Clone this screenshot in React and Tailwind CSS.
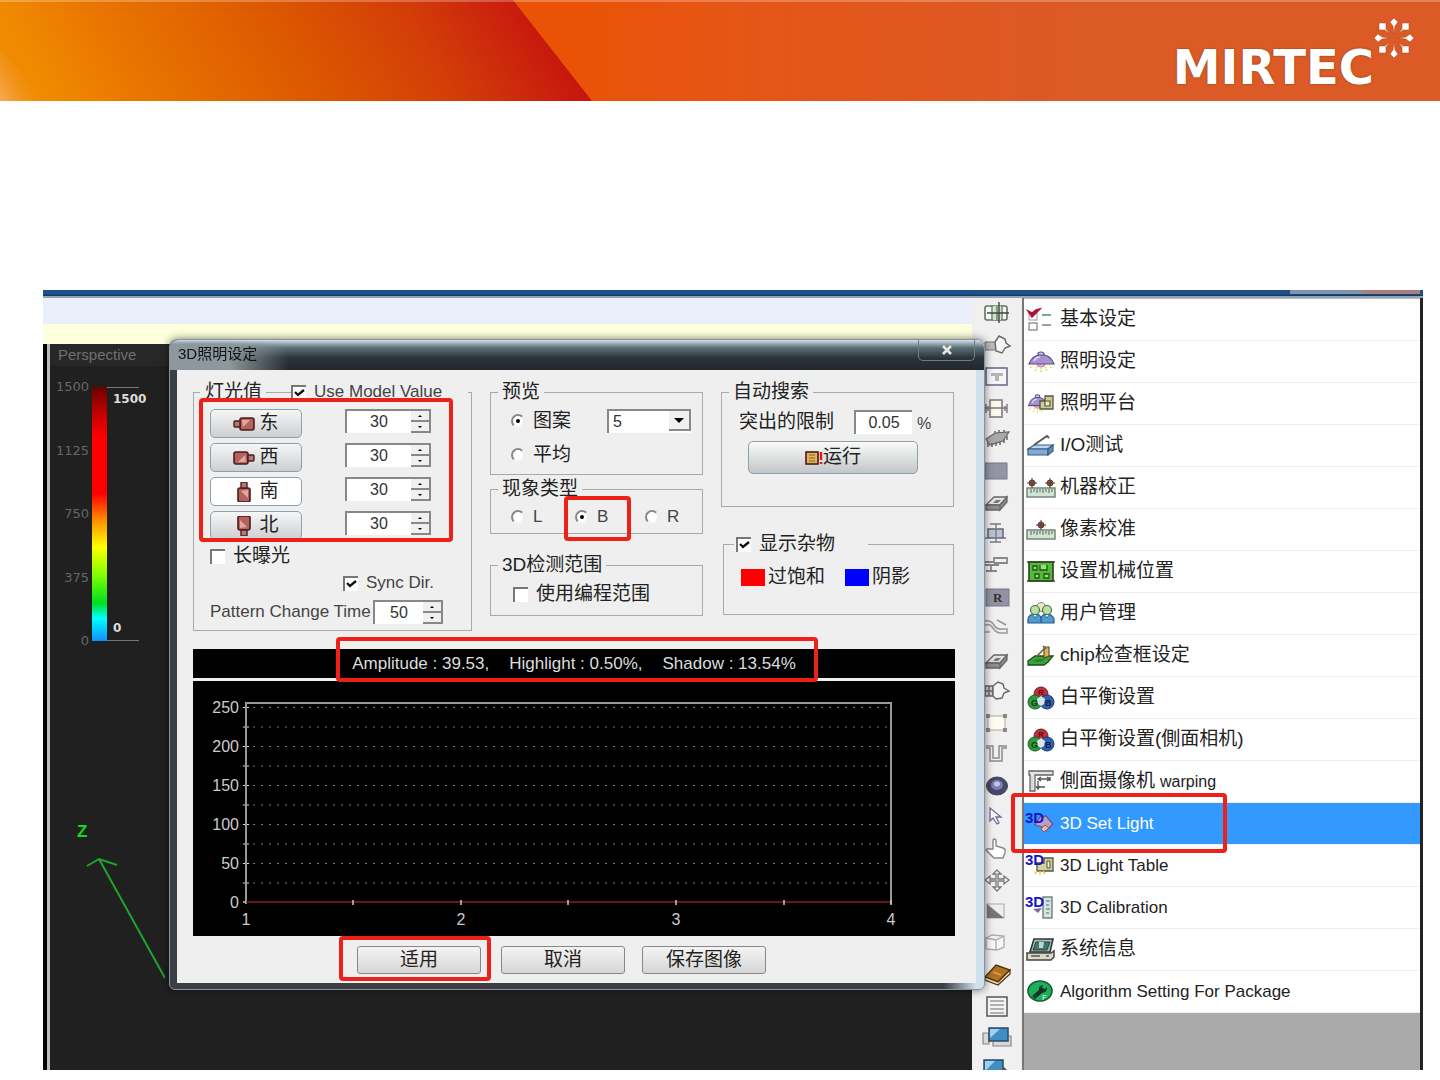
import { useState } from 'react';
import clsx from 'clsx';

const camera = (
  <>
    <rect x="7" y="4" width="14" height="12" rx="2" fill="#b5625e" stroke="#4a1d1a" strokeWidth="1.6" />
    <path d="M9 6h8l-7 7z" fill="#e0a8a0" />
    <rect x="1" y="7" width="6" height="6" rx="1" fill="#b07a76" stroke="#4a1d1a" strokeWidth="1.4" />
  </>
);

const lamp = (
  <>
    <path d="M3 18l3-2M8 21l2-4M14 22v-4M20 21l-2-4M25 18l-3-2" stroke="#e3dc55" strokeWidth="1.5" strokeDasharray="2 1" />
    <ellipse cx="14" cy="14" rx="4" ry="3" fill="#f6b9c4" stroke="#a06a80" strokeWidth="0.8" />
    <path d="M11 6V4q0-2 3-2t3 2v2" fill="#cfc3e6" stroke="#554a78" strokeWidth="1.2" />
    <path d="M2 14q3-8 10-9h5q7 1 10 9z" fill="#a692cf" stroke="#5c4a86" strokeWidth="1.2" />
    <path d="M7 11q2-4 6-4" stroke="#e4dcf5" strokeWidth="1.5" fill="none" />
  </>
);

const target = (x) => (
  <g>
    <circle cx={x} cy="7" r="3" fill="#8a5a4a" stroke="#5a3a30" />
    <path d={`M${x - 5} 7h10M${x} 2v10`} stroke="#5a3a30" />
  </g>
);

const ruler = (
  <>
    <rect x="0" y="12" width="28" height="9" fill="#cfe6d4" stroke="#6e7f72" strokeWidth="1.4" />
    <path d="M4 13v4M7 13v3M10 13v4M13 13v3M16 13v4M19 13v3M22 13v4M25 13v3" stroke="#556058" />
  </>
);

const whiteBalance = (
  <>
    <circle cx="14" cy="8" r="7" fill="#c32f3c" stroke="#6b2030" />
    <circle cx="8" cy="16" r="7" fill="#2f9a3c" stroke="#1f5a28" />
    <circle cx="20" cy="16" r="7" fill="#2f62ad" stroke="#1d3a6c" />
    <path d="M14 10l4 3-1 5-3 2-3-2-1-5z" fill="#d7e6ea" />
    <text x="4" y="20" fontSize="9" fontWeight="700" fill="#0d3a14">G</text>
    <text x="18" y="20" fontSize="9" fontWeight="700" fill="#0c1f45">B</text>
    <text x="11" y="9" fontSize="8" fontWeight="700" fill="#5c0d18">R</text>
  </>
);

const threeD = <text x="-2" y="11" fontSize="15" fontWeight="700" fill="#1414c8">3D</text>;

const menuItems = [
  {
    label: '基本设定',
    icon: (
      <>
        <rect x="2" y="5" width="8" height="7" fill="#fff" stroke="#999" />
        <path d="M1 3l4 6 8-8-4 1-4 3z" fill="#b01238" stroke="#b01238" strokeWidth="1.5" />
        <rect x="2" y="15" width="8" height="7" fill="#fff" stroke="#888" strokeWidth="1.3" />
        <path d="M15 7h9" stroke="#4a9a86" strokeWidth="1.6" />
        <path d="M15 17h9" stroke="#888" strokeWidth="1.6" />
      </>
    ),
  },
  { label: '照明设定', icon: lamp },
  {
    label: '照明平台',
    icon: (
      <>
        <g transform="translate(0 1) scale(0.75 0.9)">{lamp}</g>
        <path d="M13 9h5V4h8v13H13z" fill="#cfcb9c" stroke="#55563c" strokeWidth="1.3" />
        <path d="M18 9h5v5h-5z" fill="#eceabf" stroke="#55563c" strokeWidth="1.2" />
      </>
    ),
  },
  {
    label: 'I/O测试',
    icon: (
      <>
        <path d="M1 15l6-4h19l-5 4z" fill="#b9d4ee" stroke="#3a5a80" strokeWidth="1.2" />
        <path d="M1 15h20v6H1z" fill="#7fabd6" stroke="#3a5a80" strokeWidth="1.2" />
        <path d="M21 15l5-4v6l-5 4z" fill="#5f8bb8" stroke="#3a5a80" strokeWidth="1.2" />
        <path d="M7 11L20 2l2 2" stroke="#555" strokeWidth="1.8" fill="none" />
      </>
    ),
  },
  { label: '机器校正', icon: <>{ruler}{target(5)}{target(23)}</> },
  { label: '像素校准', icon: <>{ruler}{target(14)}</> },
  {
    label: '设置机械位置',
    icon: (
      <>
        <rect x="2" y="2" width="24" height="19" fill="#55b93c" stroke="#26401e" strokeWidth="1.6" />
        <path d="M0 2h28M0 21h28" stroke="#3c4a30" strokeWidth="1.6" />
        <path d="M6 6h4v4H6zM13 5v5h7V5M8 14h4v4H8zM17 14h5v4h-5z" fill="#9ce07a" stroke="#1e5218" strokeWidth="1.3" />
      </>
    ),
  },
  {
    label: '用户管理',
    icon: (
      <>
        <circle cx="14" cy="5" r="4.500" fill="#f0e3c8" stroke="#8e8c70" />
        <path d="M1 21v-4q1-5 7-5t6 5v4zM14 21v-4q1-5 6-5t7 5v4z" fill="#4f9dd0" stroke="#245a86" strokeWidth="1.2" />
        <circle cx="8" cy="8" r="4.500" fill="#b9dfa2" stroke="#47734a" strokeWidth="1.2" />
        <circle cx="20" cy="8" r="4.500" fill="#b9dfa2" stroke="#47734a" strokeWidth="1.2" />
        <path d="M6 13l2 3 2-3M18 13l2 3 2-3" fill="#e8f4fa" stroke="#245a86" strokeWidth="0.8" />
      </>
    ),
  },
  {
    label: 'chip检查框设定',
    icon: (
      <>
        <path d="M1 17l7-5h18l-5 6-4 3H1z" fill="#3da23a" stroke="#174f18" strokeWidth="1.3" />
        <path d="M17 14V3h5v9z" fill="#d8b45a" stroke="#66501c" strokeWidth="1.2" />
        <path d="M18 4l-9 9M16 2l3 3" stroke="#5a6c3a" strokeWidth="1.6" />
        <path d="M6 18l4-3h8l-4 3z" fill="#2c7f2c" />
      </>
    ),
  },
  { label: '白平衡设置', icon: whiteBalance },
  { label: '白平衡设置(側面相机)', icon: whiteBalance },
  {
    label: '側面摄像机',
    suffix: 'warping',
    icon: (
      <>
        <path d="M2 1h24v4H8v16H3V5H2z" fill="#e4e4e4" stroke="#666" strokeWidth="1.3" />
        <path d="M12 9h11M11 11v8M23 7v4M14 7l-3 2 3 2M20 7l3 2-3 2M9 16l2 3 2-3M11 17h7" fill="none" stroke="#555" strokeWidth="1.3" />
        <path d="M5 7v12" stroke="#aaa" strokeDasharray="1 1" />
      </>
    ),
  },
  {
    label: '3D Set Light',
    active: true,
    icon: (
      <>
        <path d="M8 13l5-8 6-1 7 8-7 7-4-4z" fill="#b7a0c8" stroke="#6a4a80" strokeWidth="1.2" />
        <path d="M14 17l4-4 4 3-5 4z" fill="#f0b8a8" stroke="#8a5c5c" />
        {threeD}
      </>
    ),
  },
  {
    label: '3D Light Table',
    icon: (
      <>
        <path d="M10 9h7V4h9v13H10z" fill="#d3cfa4" stroke="#55563c" strokeWidth="1.3" />
        <path d="M20 7h3v7h-3z" fill="#f0eec8" stroke="#55563c" />
        <path d="M8 20l2-3M13 21v-4M18 20l-2-3" stroke="#e3c94a" strokeWidth="1.5" />
        {threeD}
      </>
    ),
  },
  {
    label: '3D Calibration',
    icon: (
      <>
        <rect x="16" y="1" width="9" height="21" fill="#d7e6dc" stroke="#66756c" strokeWidth="1.3" />
        <path d="M19 5h4M19 9h3M19 13h4M19 17h3" stroke="#4a66a0" strokeWidth="1.2" />
        <path d="M6 13l5 4 4-5z" fill="#7c6a9a" />
        {threeD}
      </>
    ),
  },
  {
    label: '系统信息',
    icon: (
      <>
        <path d="M7 1h19l-3 13H3z" fill="#a9bcc6" stroke="#333" strokeWidth="1.6" />
        <path d="M9 4h14l-3 8H6z" fill="#3f7a5c" stroke="#24443a" />
        <path d="M12 4h5l-1 6h-4z" fill="#b8d4e8" />
        <path d="M0 15h24l3-2v6l-3 3H0z" fill="#ddd9c4" stroke="#444" strokeWidth="1.5" />
        <path d="M4 18h9M19 18h3" stroke="#555" strokeWidth="1.4" />
      </>
    ),
  },
  {
    label: 'Algorithm Setting For Package',
    icon: (
      <>
        <ellipse cx="13" cy="11" rx="12" ry="10" fill="#1fae5c" stroke="#155c38" strokeWidth="1.6" />
        <path d="M5 16l7-6q-1-4 4-5l-1 3 3 1 2-2q1 5-5 6l-7 6z" fill="#163424" />
        <text x="15" y="20" fontSize="8" fill="#d9ffe6">F</text>
      </>
    ),
  },
];

const chip = (
  <>
    <path d="M1 11l9-6 14-1-6 9-13 4z" fill="#a9a9a9" stroke="#666" strokeWidth="1.2" />
    <path d="M3 14v5M7 15v4M11 14v4M15 13v4M19 11v4M22 8v4M10 5V3M14 5V2M19 4V2" stroke="#666" strokeWidth="1.5" />
  </>
);

const eraser = (
  <>
    <path d="M1 14l8-8h13l-7 8z" fill="#e2e2e2" stroke="#666" strokeWidth="1.3" />
    <path d="M1 14h14v5H1zM15 14l7-8v5l-7 8z" fill="#8d8d8d" stroke="#666" strokeWidth="1.3" />
    <path d="M8 12l3-3h5l-3 3z" fill="#777" />
  </>
);

const tools = [
  {
    name: 'Grid',
    icon: (
      <>
        <rect x="0" y="4" width="22" height="14" rx="2" fill="#f4f8f4" stroke="#667066" strokeWidth="1.6" />
        <path d="M8 4h8v14H8z" fill="#c8e8c8" />
        <path d="M7 4v14M17 4v14M12 4v14" stroke="#667066" strokeWidth="1.3" />
        <path d="M14 0v21M2 11h22" stroke="#444" strokeWidth="1.4" />
      </>
    ),
  },
  {
    name: 'Box',
    icon: (
      <>
        <path d="M0 8h11v8H0z" fill="#bbb" stroke="#777" />
        <path d="M10 8l4-6 6 3 1 4 4 3-5 2-3 5-6-2z" fill="#f6f6f6" stroke="#666" strokeWidth="1.4" />
      </>
    ),
  },
  {
    name: 'Text',
    icon: (
      <>
        <rect x="1" y="3" width="21" height="17" fill="#f6f6fa" stroke="#666688" strokeWidth="1.5" />
        <path d="M6 8h12v3h-4v5h-4v-5H6z" fill="#b5b5b5" />
      </>
    ),
  },
  {
    name: 'Fiducial',
    icon: (
      <>
        <rect x="5" y="3" width="12" height="17" fill="#fbf8ec" stroke="#777" strokeWidth="1.5" />
        <path d="M5 11h12M0 11h5M17 11h5M1 7v9M22 7v9M3 9v5M20 9v5" stroke="#777" strokeWidth="1.4" />
      </>
    ),
  },
  { name: 'Chip', icon: chip },
  { name: 'Fill', icon: <rect x="0" y="3" width="22" height="16" fill="#9594a6" stroke="#777788" /> },
  { name: 'Eraser', icon: eraser },
  {
    name: 'Clamp',
    icon: (
      <>
        <rect x="3" y="6" width="15" height="9" fill="#b8c4d4" stroke="#666677" strokeWidth="1.5" />
        <path d="M5 1h11M11 1v5M5 19h11M11 15v4M0 15h3M18 15h3M11 6v9" stroke="#777788" strokeWidth="1.4" />
      </>
    ),
  },
  { name: 'Lead', icon: <path d="M0 8h9V4h13v5H9M0 11h14M1 17h11M6 11v6" fill="none" stroke="#888" strokeWidth="1.8" /> },
  {
    name: 'Reference',
    icon: (
      <>
        <rect x="1" y="3" width="23" height="17" fill="#9392a4" stroke="#777788" />
        <text x="8" y="16" fontSize="13" fontWeight="700" fontFamily="Liberation Serif, serif" fill="#333">R</text>
      </>
    ),
  },
  { name: 'Wire', icon: <path d="M0 4q6-1 9 4t8 4h5v4h-6q-5 0-8-5T0 8M12 3l9 5M0 15h5" fill="none" stroke="#999" strokeWidth="1.5" /> },
  { name: 'Pad', icon: eraser },
  {
    name: 'Component',
    icon: (
      <>
        <path d="M0 6h8v10H0zM4 6v10M0 11h8" fill="#ccc" stroke="#666" strokeWidth="1.4" />
        <path d="M8 6l5-4 5 2 1 4 5 3-5 2-2 5-6 1-3-3z" fill="#f4f4f4" stroke="#666" strokeWidth="1.4" />
      </>
    ),
  },
  {
    name: 'Region',
    icon: (
      <>
        <rect x="3" y="4" width="17" height="14" fill="#fdfaf0" stroke="#aaa" />
        <path d="M1 2h4v4H1zM18 2h4v4h-4zM1 16h4v4H1zM18 16h4v4h-4z" fill="#888" />
      </>
    ),
  },
  { name: 'Step', icon: <path d="M1 3h7v12h6V3h8M1 5h4v13h12V5h5" fill="none" stroke="#8a8a8a" strokeWidth="1.5" /> },
  {
    name: 'Sphere',
    icon: (
      <>
        <ellipse cx="12" cy="11" rx="10.500" ry="9" fill="#46466e" stroke="#444" />
        <ellipse cx="12" cy="10" rx="6" ry="5" fill="#7d7dae" />
        <ellipse cx="12" cy="9" rx="3" ry="2.500" fill="#c4c4e6" />
      </>
    ),
  },
  { name: 'Select', icon: <path d="M5 2v13l3-3 4 6 2-1-3-6h5z" fill="#fff" stroke="#6a6a9a" strokeWidth="1.3" /> },
  { name: 'Hand', icon: <path d="M8 12V3q1-2 3 0v6l7 2q3 1 2 5l-2 5H9l-8-8q1-2 4-1z" fill="#fff" stroke="#888" strokeWidth="1.4" /> },
  {
    name: 'Move',
    icon: <path d="M12 1l4 4h-3v5h6V7l5 4-5 4v-3h-6v6h3l-4 4-4-4h3v-6H5v3l-5-4 5-4v3h6V5H8z" fill="#f4f4f4" stroke="#777" strokeWidth="1.3" />,
  },
  {
    name: 'Contrast',
    icon: (
      <>
        <rect x="2" y="4" width="17" height="14" fill="#eee" stroke="#aaa" />
        <path d="M2 4l17 14H2z" fill="#777" />
      </>
    ),
  },
  { name: 'Cube', icon: <path d="M1 6l6-3 12 1v11l-7 3-11-1zM1 6l10 2 8-4M11 8v10" fill="#f8f8f8" stroke="#aaa" strokeWidth="1.3" /> },
  {
    name: 'Book',
    icon: (
      <>
        <path d="M0 14L11 2l14 5-12 12z" fill="#b0721f" stroke="#4d3210" strokeWidth="1.4" />
        <path d="M0 14l13 5L25 7v4L13 22 0 17z" fill="#f1e3c2" stroke="#4d3210" strokeWidth="1.2" />
        <path d="M8 9l8 3" stroke="#d9a557" strokeWidth="1.6" />
      </>
    ),
  },
  {
    name: 'List',
    icon: (
      <>
        <rect x="2" y="2" width="20" height="19" fill="#f4f4f4" stroke="#555" strokeWidth="1.5" />
        <path d="M5 6h14M5 10h14M5 14h14M5 18h14" stroke="#999" strokeWidth="1.4" />
      </>
    ),
  },
  {
    name: 'Windows',
    icon: (
      <>
        <path d="M-2 7h6v11h-6zM14 10h12v10H8v-4" fill="#d8d8d8" stroke="#888" strokeWidth="1.2" />
        <rect x="4" y="2" width="19" height="13" fill="#3f8fc6" stroke="#2a4a66" strokeWidth="1.5" />
        <path d="M5 3h10L5 12z" fill="#9fd0ee" />
      </>
    ),
  },
  {
    name: 'Export',
    icon: (
      <>
        <rect x="-1" y="2" width="19" height="17" fill="#3f8fc6" stroke="#2a4a66" strokeWidth="1.5" />
        <path d="M0 3h10L0 13z" fill="#9fd0ee" />
        <path d="M17 7v9l6-3z" fill="#555" />
      </>
    ),
  },
];

const directions = [
  { key: 'east', label: '东', turn: 'rotate(0)' },
  { key: 'west', label: '西', turn: 'rotate(180 11 10)' },
  { key: 'south', label: '南', turn: 'rotate(90 11 10)', active: true },
  { key: 'north', label: '北', turn: 'rotate(270 11 10)' },
];

const yLabels = [250, 200, 150, 100, 50, 0];
const gridRows = [0, 1, 2, 3, 4, 5, 6, 7, 8, 9];

// Red frame drawn over the part it points at
function Highlight({ className }) {
  return <div className={clsx('pointer-events-none absolute z-10 rounded-[4px] border-4 border-[#ee2118]', className)} />;
}

function Check({ id, label, defaultChecked, className, textClass = 'text-[19px] text-[#222]' }) {
  return (
    <div className={clsx('flex h-5 items-center gap-2', className)}>
      <span className="relative h-[15px] w-[15px]">
        <input
          id={id}
          type="checkbox"
          defaultChecked={defaultChecked}
          className="peer block h-[15px] w-[15px] appearance-none border-t-2 border-l-2 border-[#777] bg-white"
        />
        <svg viewBox="0 0 15 15" className="pointer-events-none absolute inset-0 hidden peer-checked:block">
          <path d="M4 7l3 3 6-5" fill="none" stroke="#111" strokeWidth="2.4" />
        </svg>
      </span>
      <label htmlFor={id} className={clsx('leading-5 whitespace-nowrap', textClass)}>{label}</label>
    </div>
  );
}

function Radio({ id, name, label, defaultChecked, textClass = 'text-[19px] text-[#222]' }) {
  return (
    <div className="flex h-5 items-center gap-2">
      <span className="relative h-[14px] w-[14px]">
        <input
          id={id}
          name={name}
          type="radio"
          defaultChecked={defaultChecked}
          className="peer block h-[14px] w-[14px] appearance-none rounded-full border-2 border-t-[#888] border-r-[#eee] border-b-[#f4f4f4] border-l-[#888] bg-white"
        />
        <span className="pointer-events-none absolute inset-[5px] hidden rounded-full bg-black peer-checked:block" />
      </span>
      <label htmlFor={id} className={clsx('leading-5', textClass)}>{label}</label>
    </div>
  );
}

function Spinner({ id, label, value, className }) {
  const [n, setN] = useState(value);
  const step = 'flex flex-1 items-center justify-center border-r-2 border-b-2 border-[#888] bg-[#f0f0f0]';
  return (
    <div className={clsx('flex h-6 border-t-2 border-l-2 border-[#888] bg-white', className)}>
      <input
        id={id}
        aria-label={label}
        value={n}
        onChange={(e) => setN(e.target.value)}
        className="min-w-0 flex-1 bg-white text-center text-base leading-5 text-[#333] outline-none"
      />
      <div className="flex w-5 flex-col">
        <button type="button" aria-label="+" className={step} onClick={() => setN(Number(n) + 1)}>
          <svg viewBox="0 0 4 2" className="h-[2px] w-1"><path d="M0 2l2-2 2 2z" /></svg>
        </button>
        <button type="button" aria-label="-" className={step} onClick={() => setN(Number(n) - 1)}>
          <svg viewBox="0 0 4 2" className="h-[2px] w-1"><path d="M0 0l2 2 2-2z" /></svg>
        </button>
      </div>
    </div>
  );
}

function Group({ title, className, children }) {
  return (
    <fieldset className={clsx('min-w-0 border border-[#a9a9a9]', className)}>
      <legend className="ml-[7px] h-5 px-1 text-[19px] leading-5 text-[#222]">{title}</legend>
      {children}
    </fieldset>
  );
}

function Header() {
  return (
    <header className="relative flex h-[101px] shrink-0 justify-end overflow-hidden bg-linear-to-r from-[#ea5306] from-40% to-[#dc5a26] to-75%">
      <svg viewBox="0 0 600 101" className="absolute top-0 left-0 h-full">
        <defs>
          <linearGradient id="sweep" x1="0" y1="0.1" x2="1" y2="0">
            <stop offset="0" stopColor="#f08a00" />
            <stop offset="0.15" stopColor="#ea7600" />
            <stop offset="0.45" stopColor="#dc5800" />
            <stop offset="0.68" stopColor="#d33d08" />
            <stop offset="0.8" stopColor="#cc280c" />
            <stop offset="0.9" stopColor="#c6150d" />
          </linearGradient>
          <linearGradient id="flare" x1="0" y1="1" x2="0.8" y2="0.5">
            <stop offset="0" stopColor="#f6ab58" />
            <stop offset="1" stopColor="#f08a00" stopOpacity="0" />
          </linearGradient>
        </defs>
        <path d="M0 0h513l79 101H0z" fill="url(#sweep)" />
        <path d="M0 50l48 51H0z" fill="url(#flare)" />
      </svg>
      <div className="absolute inset-x-0 top-0 h-[2px] bg-white/25" />
      <div className="relative mr-[26px] flex">
        <span className="mt-[44px] font-['DejaVu_Sans',sans-serif] text-[48px] leading-[46px] font-bold text-white [text-shadow:0_0_2px_#7a3a1a]">
          MIRTEC
        </span>
        <svg viewBox="0 0 40 40" className="mt-[18px] h-10 w-10" fill="#fff" stroke="#a04a20" strokeWidth="0.5">
          {[0, 90, 180, 270].map((a) => (
            <path key={a} d="M20 0l4 4-3 4-1 8-1-8-3-4z" transform={`rotate(${a} 20 20)`} />
          ))}
          {[0, 90, 180, 270].map((a) => (
            <path key={a} d="M5 5h7v6l4 5-5-4H5z" transform={`rotate(${a} 20 20)`} />
          ))}
        </svg>
      </div>
    </header>
  );
}

function Viewport() {
  return (
    <div className="flex min-h-0 flex-1 bg-black pl-1">
      <div className="relative flex-1 border-l-[3px] border-[#bbb] bg-[#202020]">
        <p className="bg-[#272727] pl-2 text-[15px] leading-[22px] text-[#707070]">Perspective</p>
        <div className="mt-[13px] ml-[5px] flex font-['DejaVu_Sans',sans-serif] text-[13px] leading-4 text-[#666]">
          <div className="flex w-[34px] flex-col justify-between text-right">
            {[1500, 1125, 750, 375, 0].map((v) => <span key={v}>{v}</span>)}
          </div>
          <div className="my-2 ml-[3px] h-[254px] w-[15px] bg-[linear-gradient(#6e0000,#c00000_10%,#ff0000_20%,#ff0000_42%,#ff8800_52%,#ffff00_63%,#80ff00_74%,#00e020_85%,#00ffff_91%,#1090ff)]" />
          <div className="my-2 flex w-[32px] flex-col justify-between border-y border-[#777] pt-[3px] pl-[6px] text-xs font-bold text-[#ddd]">
            <span>1500</span>
            <span className="pb-1">0</span>
          </div>
        </div>
        <svg viewBox="0 0 90 170" className="absolute top-[474px] left-[25px] h-[170px] w-[90px]" fill="none" stroke="#1fa52e" strokeWidth="2">
          <text x="2" y="19" fill="#14d81c" stroke="none" fontSize="17" fontWeight="700">Z</text>
          <path d="M24 41l66 119M12 48l12-7 18 6" />
        </svg>
      </div>
    </div>
  );
}

function Chart() {
  return (
    <svg viewBox="0 0 762 255" className="mt-[3px] block w-full bg-black" fontSize="16" fill="#ccc">
      {gridRows.map((i) => (
        <g key={i}>
          <line x1="60" x2="698" y1={26.5 + i * 19.5} y2={26.5 + i * 19.5} stroke="#777" strokeDasharray="2 6" />
          <line x1="50" x2="56" y1={26.5 + i * 19.5} y2={26.5 + i * 19.5} stroke="#ddd" />
        </g>
      ))}
      <path d="M53 223V22h645v201" fill="none" stroke="#999" strokeWidth="2" />
      <path d="M53 221h645" stroke="#8e1a22" strokeWidth="1.5" />
      <path d="M160 219v5M268 219v5M375 219v5M483 219v5M591 219v5M698 219v5M50 221h3" stroke="#ccc" strokeWidth="1.5" />
      {yLabels.map((v, i) => (
        <text key={v} x="46" y={32 + i * 39} textAnchor="end">{v}</text>
      ))}
      {[1, 2, 3, 4].map((v, i) => (
        <text key={v} x={53 + i * 215} y="244" textAnchor="middle">{v}</text>
      ))}
    </svg>
  );
}

function LightDialog() {
  const glossy = 'flex items-center justify-center rounded-[5px] border border-[#8d9fac] text-[19px] text-[#222]';
  const footerButton = 'h-7 w-[124px] rounded-[3px] border border-[#888] bg-linear-to-b from-[#f4f4f4] to-[#d6d6d6] text-[19px] leading-6 text-[#222]';
  return (
    <section className="absolute top-[49px] left-[126px] z-10 w-[816px] rounded-t-lg rounded-b-[6px] border border-[#8b9299] bg-linear-to-r from-[#3b3f45] from-95% to-[#cfe1ec] to-99% pr-2 pb-[6px] pl-[7px] shadow-[0_0_8px_#0008]">
      <div className="-mr-2 -ml-[7px] flex h-[30px] justify-between rounded-t-lg bg-[linear-gradient(#cfe3ee,#5f7078_25%,#2b3338_60%,#23282d)] pr-[9px] pl-2">
        <h1 className="-ml-2 bg-linear-to-r from-[#8d979d] from-50% to-transparent pr-8 pl-2 text-[15px] leading-7 text-[#111] [mask-image:linear-gradient(transparent,black_20%)]">
          3D照明设定
        </h1>
        <button type="button" aria-label="Close" className="flex h-[21px] w-[57px] items-center justify-center rounded-b-[5px] border border-t-0 border-[#6f7c84]">
          <svg viewBox="0 0 12 10" className="h-[10px] w-3"><path d="M2 1l8 8M10 1L2 9" stroke="#e6e6e6" strokeWidth="2.6" /></svg>
        </button>
      </div>
      <div className="bg-[#efefef] pt-3 pr-[21px] pb-[9px] pl-4">
        <div className="grid grid-cols-[279px_213px_233px] items-start gap-[18px]">
          <fieldset className="relative min-w-0 border border-[#a9a9a9] pb-[6px] pl-4">
            <legend className="-ml-[10px] flex h-5 w-[268px] items-center bg-[#efefef] pl-[5px] text-[19px] leading-5 text-[#222]">
              灯光值
              <span className="ml-1 w-[25px] border-t border-[#a9a9a9]" />
              <Check id="model" label="Use Model Value" defaultChecked textClass="text-[17px] text-[#444]" />
            </legend>
            <Highlight className="top-[-4px] left-[5px] h-[144px] w-[254px]" />
            <div className="flex flex-col gap-[5px] pt-[7px]">
              {directions.map((d) => (
                <div key={d.key} className="flex gap-[43px]">
                  <button
                    type="button"
                    className={clsx(glossy, 'h-[29px] w-[92px] gap-1', d.active ? 'bg-white' : 'bg-linear-to-b from-[#f6f6f6] to-[#cdd0d2]')}
                  >
                    <svg viewBox="0 0 22 20" className="h-5 w-[22px]"><g transform={d.turn}>{camera}</g></svg>
                    {d.label}
                  </button>
                  <Spinner label={d.label} value="30" className="w-[86px]" />
                </div>
              ))}
            </div>
            <Check id="exposure" label="长曝光" className="mt-[6px]" />
            <Check id="sync" label="Sync Dir." defaultChecked className="mt-[7px] ml-[133px]" textClass="text-[17px] text-[#444]" />
            <div className="mt-[7px] flex items-center gap-[3px]">
              <label htmlFor="change-time" className="w-[160px] text-[17px] leading-6 whitespace-nowrap text-[#444]">Pattern Change Time</label>
              <Spinner id="change-time" value="50" className="w-[70px]" />
            </div>
          </fieldset>

          <div>
            <Group title="预览">
              <div className="flex items-center gap-9 pt-[7px] pl-5">
                <Radio id="pattern" name="preview" label="图案" defaultChecked />
                <div className="relative">
                  <select aria-label="图案" defaultValue="5" className="block h-6 w-[84px] appearance-none border-t-2 border-l-2 border-[#888] bg-white pl-1 text-base leading-5 text-[#333]">
                    <option>5</option>
                  </select>
                  <span className="pointer-events-none absolute inset-y-[2px] right-0 flex w-[22px] items-center justify-center border-r-2 border-b-2 border-[#888] bg-[#f0f0f0]">
                    <svg viewBox="0 0 10 5" className="h-[5px] w-[10px]"><path d="M0 0h10L5 5z" /></svg>
                  </span>
                </div>
              </div>
              <div className="pt-3 pb-[9px] pl-5"><Radio id="average" name="preview" label="平均" /></div>
            </Group>
            <Group title="现象类型" className="relative mt-1">
              <Highlight className="top-[-3px] left-[73px] h-[45px] w-[67px]" />
              <div className="flex pt-2 pb-[6px] pl-5">
                <div className="w-16"><Radio id="type-l" name="type" label="L" textClass="text-[17px] text-[#444]" /></div>
                <div className="w-[70px]"><Radio id="type-b" name="type" label="B" defaultChecked textClass="text-[17px] text-[#444]" /></div>
                <Radio id="type-r" name="type" label="R" textClass="text-[17px] text-[#444]" />
              </div>
            </Group>
            <Group title="3D检测范围" className="mt-[21px]">
              <div className="pt-[9px] pb-[11px] pl-[22px]">
                <Check id="range" label="使用编程范围" />
              </div>
            </Group>
          </div>

          <div>
            <Group title="自动搜索" className="pb-8">
              <div className="flex pt-2 pl-[17px]">
                <label htmlFor="limit" className="w-[115px] text-[19px] leading-6 text-[#222]">突出的限制</label>
                <input id="limit" defaultValue="0.05" className="h-6 w-[58px] border-t-2 border-l-2 border-[#888] bg-white text-center text-base leading-5 text-[#333]" />
                <span className="ml-[5px] pt-1 text-base leading-5 text-[#444]">%</span>
              </div>
              <button type="button" className={clsx(glossy, 'mt-[7px] ml-[26px] h-[33px] w-[170px] bg-linear-to-b from-[#fafafa] to-[#c3c6c8]')}>
                <svg viewBox="0 0 18 16" className="h-4 w-[18px]">
                  <rect x="1" y="2" width="12" height="12" fill="#e0b45a" stroke="#4a1a14" strokeWidth="1.6" />
                  <path d="M4 5h6M4 8h6M4 11h6" stroke="#8a6420" />
                  <path d="M16 2v8M16 12v2" stroke="#e01818" strokeWidth="2.4" />
                </svg>
                运行
              </button>
            </Group>
            <fieldset className="mt-[27px] ml-[2px] border border-[#a9a9a9] pb-[27px]">
              <legend className="ml-[10px] h-5 w-[134px] pl-[2px]">
                <Check id="noise" label="显示杂物" defaultChecked />
              </legend>
              <div className="flex items-center pt-[13px] pl-[17px] text-[19px] leading-5 text-[#222]">
                <span className="mr-[3px] h-[17px] w-6 bg-[#fe0000]" />
                过饱和
                <span className="mr-[3px] ml-5 h-[17px] w-6 bg-[#0000fe]" />
                阴影
              </div>
            </fieldset>
          </div>
        </div>

        <div className="relative mt-[18px] bg-black">
          <p className="flex h-[29px] items-center justify-center gap-5 text-[17px] text-[#ddd]">
            <span>Amplitude : 39.53,</span>
            <span>Highlight : 0.50%,</span>
            <span>Shadow : 13.54%</span>
          </p>
          <Highlight className="top-[-12px] left-[143px] h-[45px] w-[482px]" />
        </div>
        <Chart />

        <div className="flex pt-[10px] pl-[164px]">
          <div className="relative mr-5">
            <Highlight className="-top-[10px] -left-[18px] h-[45px] w-[152px]" />
            <button type="button" className={footerButton}>适用</button>
          </div>
          <button type="button" className={clsx(footerButton, 'mr-[17px]')}>取消</button>
          <button type="button" className={footerButton}>保存图像</button>
        </div>
      </div>
    </section>
  );
}

function Toolbar() {
  return (
    <div className="w-[52px] overflow-hidden border-r-2 border-[#777] bg-[#f0f0f0]">
      <div className="flex h-[787px] flex-col">
        {tools.map((t) => (
          <button key={t.name} type="button" aria-label={t.name} className="flex min-h-0 flex-1 items-center justify-center">
            <svg viewBox="0 0 24 23" className="h-[23px] w-6 overflow-visible">{t.icon}</svg>
          </button>
        ))}
      </div>
    </div>
  );
}

function SideMenu() {
  return (
    <nav className="w-[399px] border-r-[3px] border-[#222] bg-[#aaa]">
      <ul className="border-t border-[#bbb] bg-white">
        {menuItems.map((m) => (
          <li key={m.label} className="relative">
            <a
              href="#"
              className={clsx(
                'flex h-[42px] items-center gap-[5px] border-b border-[#eee] pl-[3px] text-[19px]',
                m.active ? 'bg-[#3399ff] text-white' : 'text-[#222]'
              )}
            >
              <svg viewBox="0 0 28 23" className="h-[23px] w-7 overflow-visible">{m.icon}</svg>
              <span className={/^[A-Z0-9a-z ]+$/.test(m.label) ? 'text-[17px]' : undefined}>{m.label}</span>
              {m.suffix && <span className="text-base">{m.suffix}</span>}
            </a>
            {m.active && <Highlight className="-top-[10px] -left-[13px] h-[60px] w-[216px]" />}
          </li>
        ))}
      </ul>
    </nav>
  );
}

export default function App() {
  return (
    <div className="flex h-screen flex-col bg-white font-['Liberation_Sans','Noto_Sans_CJK_SC',sans-serif]">
      <Header />
      <main className="relative mt-[189px] mr-[17px] mb-[10px] ml-[43px] flex min-h-0 flex-1 flex-col overflow-hidden">
        <div className="flex h-2 shrink-0 justify-end border-b-2 border-[#8fa3ba] bg-linear-to-b from-[#1d5189] from-60% to-[#173552]">
          <div className="mr-[3px] h-1 w-[130px] bg-linear-to-r from-[#8093ad] from-50% to-[#a77f80] to-60%" />
        </div>
        <div className="flex min-h-0 flex-1">
          <div className="flex min-w-0 flex-1 flex-col">
            <div className="h-[26px] shrink-0 bg-[#ebeefb]" />
            <div className="h-5 shrink-0 bg-[#feffdc]" />
            <Viewport />
          </div>
          <Toolbar />
          <SideMenu />
        </div>
        <LightDialog />
      </main>
    </div>
  );
}
